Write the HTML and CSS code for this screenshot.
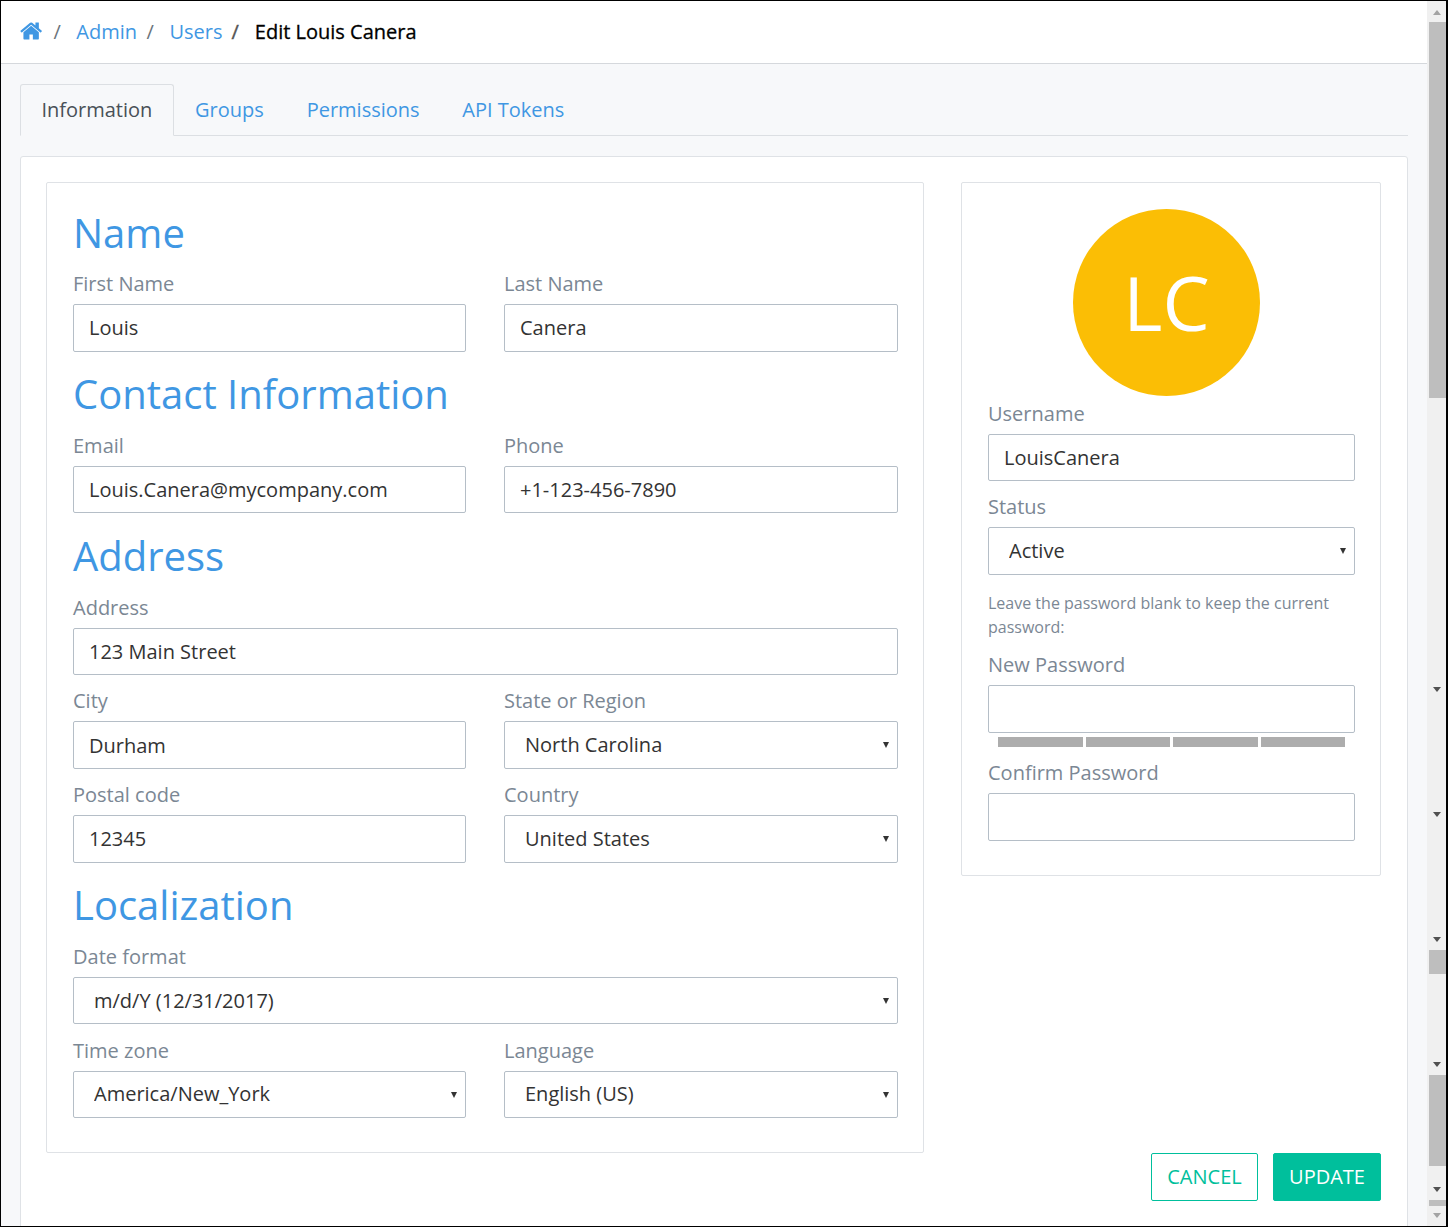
FILE: index.html
```html
<!DOCTYPE html>
<html lang="en">
<head>
  <meta charset="UTF-8">
  <title>Edit Louis Canera</title>
  <link rel="stylesheet" href="styles.css">
</head>
<body>
<div class="frame">
  <div class="page">
    <nav class="crumbs">
      <a class="home" href="#">
        <svg viewBox="0 0 1792 1792" width="24" height="24"><path fill="currentColor" d="M1408 992v480q0 26-19 45t-45 19h-384v-384h-256v384h-384q-26 0-45-19t-19-45v-480q0-1 .5-3t.5-3l575-474 575 474q1 2 1 6zm223-69l-62 74q-8 9-21 11h-3q-13 0-21-7l-692-577-692 577q-12 8-24 7-13-2-21-11l-62-74q-8-10-7-23.5t11-21.5l719-599q32-26 76-26t76 26l244 204v-195q0-14 9-23t23-9h192q14 0 23 9t9 23v408l219 182q10 8 11 21.5t-7 23.5z"/></svg>
      </a>
      <span class="sep">/</span>
      <a href="#">Admin</a>
      <span class="sep">/</span>
      <a href="#">Users</a>
      <span class="sep sep-last">/</span>
      <span class="current">Edit Louis Canera</span>
    </nav>

    <main class="content">
      <ul class="tabs">
        <li class="tab active">Information</li>
        <li class="tab">Groups</li>
        <li class="tab">Permissions</li>
        <li class="tab">API Tokens</li>
      </ul>

      <div class="card">
        <div class="card-cols">
          <section class="panel panel-main">
            <h2>Name</h2>
            <div class="row">
              <div class="field"><label>First Name</label><input class="control" value="Louis"></div>
              <div class="field"><label>Last Name</label><input class="control" value="Canera"></div>
            </div>

            <h2>Contact Information</h2>
            <div class="row">
              <div class="field"><label>Email</label><input class="control" value="Louis.Canera@mycompany.com"></div>
              <div class="field"><label>Phone</label><input class="control" value="+1-123-456-7890"></div>
            </div>

            <h2>Address</h2>
            <div class="row">
              <div class="field wide"><label>Address</label><input class="control" value="123 Main Street"></div>
              <div class="field"><label>City</label><input class="control" value="Durham"></div>
              <div class="field"><label>State or Region</label>
                <div class="select"><select class="control"><option>North Carolina</option></select></div>
              </div>
              <div class="field"><label>Postal code</label><input class="control" value="12345"></div>
              <div class="field"><label>Country</label>
                <div class="select"><select class="control"><option>United States</option></select></div>
              </div>
            </div>

            <h2>Localization</h2>
            <div class="row">
              <div class="field wide"><label>Date format</label>
                <div class="select"><select class="control"><option>m/d/Y (12/31/2017)</option></select></div>
              </div>
              <div class="field"><label>Time zone</label>
                <div class="select"><select class="control"><option>America/New_York</option></select></div>
              </div>
              <div class="field"><label>Language</label>
                <div class="select"><select class="control"><option>English (US)</option></select></div>
              </div>
            </div>
          </section>

          <div class="side">
            <section class="panel panel-user">
              <div class="avatar">LC</div>
              <div class="stack">
                <div class="field"><label>Username</label><input class="control" value="LouisCanera"></div>
                <div class="field"><label>Status</label>
                  <div class="select"><select class="control"><option>Active</option></select></div>
                </div>
                <p class="note">Leave the password blank to keep the current password:</p>
                <div class="field"><label>New Password</label><input class="control" type="password">
                  <div class="strength"><span></span><span></span><span></span><span></span></div>
                </div>
                <div class="field"><label>Confirm Password</label><input class="control" type="password"></div>
              </div>
            </section>
            <div class="actions">
              <button class="btn btn-outline">CANCEL</button>
              <button class="btn btn-solid">UPDATE</button>
            </div>
          </div>
        </div>
      </div>
    </main>
  </div>

  <!-- several stacked scrollbars in the capture -->
  <div class="scrollbar">
    <i class="arrow up"></i>
    <b class="thumb t1"></b>
    <i class="arrow a1"></i>
    <i class="arrow a2"></i>
    <i class="arrow a3"></i>
    <b class="thumb t2"></b>
    <i class="arrow a4"></i>
    <b class="thumb t3"></b>
    <i class="arrow a5"></i>
    <b class="thumb t4"></b>
    <i class="arrow a6"></i>
  </div>
</div>
</body>
</html>
```

FILE: styles.css
```css
* {
  box-sizing: border-box;
}
html,
body {
  margin: 0;
  height: 100%;
}
body {
  font-family: "Open Sans", sans-serif;
  font-size: 20px;
  line-height: 30px;
  color: #333;
  overflow: hidden;
}
a {
  color: #3f97e3;
  text-decoration: none;
}

.frame {
  display: flex;
  width: 1448px;
  height: 1227px;
  overflow: hidden;
  border: 1px solid #000;
  border-right-width: 2px;
  background: #f7f8fa;
}
.page {
  width: 1426px;
  flex-shrink: 0;
}

/* breadcrumb */
.crumbs {
  display: flex;
  align-items: center;
  height: 63px;
  padding-left: 19px;
  background: #fff;
  border-bottom: 1px solid #d5d8dc;
}
.home {
  display: flex;
  width: 24px;
  margin-top: -2px;
}
.sep {
  margin: 0 15.5px 0 9.5px;
  color: #6c757d;
}
.sep-last {
  margin: 0 14px 0 9px;
  color: #555;
  -webkit-text-stroke: 0.4px #555;
}
.current {
  color: #000;
  font-weight: 500;
  -webkit-text-stroke: 0.3px #000;
  margin-left: 2px;
}

.content {
  padding: 20px 19px 0;
}

/* tabs */
.tabs {
  display: flex;
  list-style: none;
  margin: 0 0 20px;
  padding: 0;
  height: 52px;
  border-bottom: 1px solid #dcdfe3;
}
.tab {
  padding: 10px 20.4px;
  height: 52px;
  color: #3f97e3;
  border: 1px solid transparent;
  border-radius: 3px 3px 0 0;
}
.tab.active {
  color: #495057;
  background: #f7f8fa;
  border-color: #dcdfe3 #dcdfe3 #f7f8fa;
}

/* white card */
.card {
  background: #fff;
  border: 1px solid #dfe2e6;
  border-radius: 3px;
  padding: 25px 26px 25px 25px;
  height: 1100px;
}
.card-cols {
  display: flex;
  align-items: flex-start;
  gap: 37px;
}
.panel {
  background: #fff;
  border: 1px solid #dfe2e6;
  border-radius: 2px;
}
.panel-main {
  width: 878px;
  height: 971px;
  padding: 25.7px 25px 0 26px;
}
.side {
  width: 420px;
}
.panel-user {
  height: 694px;
  padding: 26px 25px 0 26px;
}

h2 {
  margin: 0 0 13px;
  font-size: 40px;
  font-weight: 400;
  line-height: 48px;
  color: #3f97e3;
}
h2:first-child {
  margin-bottom: 12.5px;
}
.row + h2 {
  margin-top: 18.2px;
}

.row {
  display: grid;
  grid-template-columns: 393px 394px;
  column-gap: 38px;
  row-gap: 11.25px;
}
.field.wide {
  grid-column: 1 / 3;
}
label {
  display: block;
  height: 30px;
  margin-bottom: 5px;
  color: #7b8794;
}
.control {
  display: block;
  width: 100%;
  height: 47.5px;
  margin: 0;
  padding: 0 15px;
  font: inherit;
  color: #333;
  background: #fff;
  border: 1px solid #b5bec7;
  border-radius: 2px;
  outline: none;
}

.select {
  position: relative;
}
.select select {
  appearance: none;
  padding-left: 20px;
}
.select::after {
  content: "";
  position: absolute;
  right: 9px;
  top: 21px;
  border-style: solid;
  border-width: 6px 3.75px 0;
  border-color: #333 transparent transparent;
}

/* user panel */
.avatar {
  width: 187px;
  height: 187px;
  margin-left: 85px;
  border-radius: 50%;
  background: #fbbe05;
  color: #fff;
  font-size: 75px;
  line-height: 187px;
  text-align: center;
}
.stack {
  display: flex;
  flex-direction: column;
  gap: 10.8px;
  margin-top: 2.9px;
}
.note {
  margin: 5.4px 0 0.6px;
  font-size: 16px;
  line-height: 24px;
  color: #7b8794;
}
.strength {
  display: flex;
  gap: 3px;
  margin: 4px 10px 0.5px;
}
.strength span {
  flex: 1;
  height: 10px;
  background: #adadad;
}

.actions {
  display: flex;
  justify-content: flex-end;
  gap: 15px;
  margin-top: 277px;
}
.btn {
  height: 48px;
  padding: 0 15px;
  font: inherit;
  border-radius: 2px;
  border: 1px solid #00bf9c;
}
.btn-outline {
  width: 107px;
  color: #00bf9c;
  background: #fff;
}
.btn-solid {
  width: 108px;
  color: #fff;
  background: #00bf9c;
}

/* scrollbars */
.scrollbar {
  position: relative;
  width: 19px;
  background: #f0f0f0;
  margin-top: -1px;
  margin-bottom: -1px;
}
.thumb {
  position: absolute;
  left: 2px;
  right: 0;
  background: #bebebe;
}
.t1 { top: 22px; height: 376px; }
.t2 { top: 950px; height: 24px; }
.t3 { top: 1075px; height: 91px; }
.t4 { top: 1200px; height: 6px; }
.arrow {
  position: absolute;
  left: 6px;
  border-style: solid;
  border-width: 5px 4.5px 0;
  border-color: #505050 transparent transparent;
}
.arrow.up {
  top: 10px;
  border-width: 0 4.5px 5px;
  border-color: transparent transparent #a3a3a3;
}
.a1 { top: 687px; }
.a2 { top: 812px; }
.a3 { top: 937px; }
.a4 { top: 1062px; }
.a5 { top: 1187px; }
.a6 { top: 1213px; border-top-color: #a3a3a3; }
```
